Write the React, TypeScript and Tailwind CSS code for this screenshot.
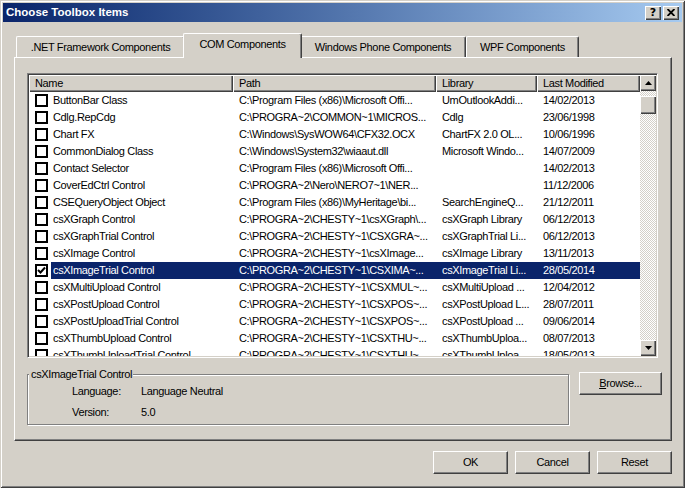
import React from "react";

const rows: [string, string, string, string][] = [
  ["ButtonBar Class", "C:\\Program Files (x86)\\Microsoft Offi...", "UmOutlookAddi...", "14/02/2013"],
  ["Cdlg.RepCdg", "C:\\PROGRA~2\\COMMON~1\\MICROS...", "Cdlg", "23/06/1998"],
  ["Chart FX", "C:\\Windows\\SysWOW64\\CFX32.OCX", "ChartFX 2.0 OL...", "10/06/1996"],
  ["CommonDialog Class", "C:\\Windows\\System32\\wiaaut.dll", "Microsoft Windo...", "14/07/2009"],
  ["Contact Selector", "C:\\Program Files (x86)\\Microsoft Offi...", "", "14/02/2013"],
  ["CoverEdCtrl Control", "C:\\PROGRA~2\\Nero\\NERO7~1\\NER...", "", "11/12/2006"],
  ["CSEQueryObject Object", "C:\\Program Files (x86)\\MyHeritage\\bi...", "SearchEngineQ...", "21/12/2011"],
  ["csXGraph Control", "C:\\PROGRA~2\\CHESTY~1\\csXGraph\\...", "csXGraph Library", "06/12/2013"],
  ["csXGraphTrial Control", "C:\\PROGRA~2\\CHESTY~1\\CSXGRA~...", "csXGraphTrial Li...", "06/12/2013"],
  ["csXImage Control", "C:\\PROGRA~2\\CHESTY~1\\csXImage...", "csXImage Library", "13/11/2013"],
  ["csXImageTrial Control", "C:\\PROGRA~2\\CHESTY~1\\CSXIMA~...", "csXImageTrial Li...", "28/05/2014"],
  ["csXMultiUpload Control", "C:\\PROGRA~2\\CHESTY~1\\CSXMUL~...", "csXMultiUpload ...", "12/04/2012"],
  ["csXPostUpload Control", "C:\\PROGRA~2\\CHESTY~1\\CSXPOS~...", "csXPostUpload L...", "28/07/2011"],
  ["csXPostUploadTrial Control", "C:\\PROGRA~2\\CHESTY~1\\CSXPOS~...", "csXPostUpload ...", "09/06/2014"],
  ["csXThumbUpload Control", "C:\\PROGRA~2\\CHESTY~1\\CSXTHU~...", "csXThumbUploa...", "08/07/2013"],
  ["csXThumbUploadTrial Control", "C:\\PROGRA~2\\CHESTY~1\\CSXTHU~...", "csXThumbUploa...", "18/05/2013"],
];

const SEL = 10;

function Tab({ label, w, selected }: { label: string; w: string; selected?: boolean }) {
  if (selected) {
    return (
      <div
        className={`${w} relative z-10 -mx-[2px] -mb-[1px] h-[25px] flex items-center justify-center bg-[#d4d0c8] border-l border-t border-r border-l-white border-t-white border-r-[#404040] rounded-t-[2px] shadow-[inset_-1px_0_0_#808080] pb-[3px]`}
      >
        {label}
      </div>
    );
  }
  return (
    <div
      className={`${w} h-[21px] flex items-center justify-center border-l border-t border-r border-l-white border-t-white border-r-[#404040] rounded-t-[2px] shadow-[inset_-1px_0_0_#808080]`}
    >
      {label}
    </div>
  );
}

function Btn({ children, w }: { children: React.ReactNode; w: string }) {
  return (
    <div
      className={`${w} h-[23px] flex items-center justify-center bg-[#d4d0c8] border border-t-white border-l-white border-r-[#404040] border-b-[#404040] shadow-[inset_-1px_-1px_0_#808080]`}
    >
      {children}
    </div>
  );
}

function HeaderCell({ label, w }: { label: string; w: string }) {
  return (
    <div
      className={`${w} h-[17px] shrink-0 flex items-center pl-[6px] bg-[#d4d0c8] shadow-[inset_1px_1px_0_#fff,inset_-1px_-1px_0_#404040,inset_-2px_-2px_0_#808080]`}
    >
      {label}
    </div>
  );
}

function Arrow({ down }: { down?: boolean }) {
  return (
    <svg width="7" height="4" viewBox="0 0 7 4" className="block">
      {down ? <polygon points="0,0 7,0 3.5,4" fill="#000" /> : <polygon points="0,4 7,4 3.5,0" fill="#000" />}
    </svg>
  );
}

const raised = "bg-[#d4d0c8] shadow-[inset_1px_1px_0_#fff,inset_-1px_-1px_0_#404040,inset_-2px_-2px_0_#808080]";

export default function App() {
  return (
    <div className="w-[685px] h-[488px] bg-[#d4d0c8] p-[3px] shadow-[inset_1px_1px_0_#d4d0c8,inset_-1px_-1px_0_#404040,inset_2px_2px_0_#fff,inset_-2px_-2px_0_#808080] font-['Liberation_Sans',Arial,sans-serif] text-[11px] leading-[13px] tracking-[-0.35px] text-black overflow-hidden">
      {/* Title bar */}
      <div className="h-[19px] flex items-center pl-[3px] pr-[3px] bg-linear-to-r from-[#0a246a] to-[#a6caf0]">
        <span className="text-white font-bold text-[11.5px] tracking-normal">Choose Toolbox Items</span>
        <div className="ml-auto flex gap-[2px]">
          <div className={`w-[16px] h-[14px] flex items-center justify-center ${raised}`}>
            <span className="font-bold text-[11px] leading-none tracking-normal font-['DejaVu_Sans',sans-serif] -mt-px">?</span>
          </div>
          <div className={`w-[16px] h-[14px] flex items-center justify-center ${raised}`}>
            <svg width="8" height="7" viewBox="0 0 8 7" className="block -mt-px">
              <path d="M0.5 0 L7.5 7 M7.5 0 L0.5 7" stroke="#000" strokeWidth="1.9" />
            </svg>
          </div>
        </div>
      </div>

      <div className="pl-[11px] pt-[11px]">
        {/* Tabs */}
        <div className="flex items-end h-[24px] pl-[2px]">
          <Tab label=".NET Framework Components" w="w-[169px]" />
          <Tab label="COM Components" w="w-[119px]" selected />
          <Tab label="Windows Phone Components" w="w-[166px]" />
          <Tab label="WPF Components" w="w-[113px]" />
        </div>

        {/* Panel */}
        <div className="w-[658px] h-[384px] border border-t-white border-l-white border-r-[#404040] border-b-[#404040] shadow-[inset_-1px_-1px_0_#808080] pl-[12px] pt-[15px]">
          {/* List view */}
          <div className="w-[631px] h-[285px] bg-white border border-t-[#808080] border-l-[#808080] border-b-white border-r-white shadow-[inset_1px_1px_0_#404040,inset_-1px_-1px_0_#d4d0c8] p-px">
            <div className="flex h-full">
              <div className="w-[611px] flex flex-col">
                <div className="flex">
                  <HeaderCell label="Name" w="w-[204px]" />
                  <HeaderCell label="Path" w="w-[203px]" />
                  <HeaderCell label="Library" w="w-[101px]" />
                  <HeaderCell label="Last Modified" w="w-[103px]" />
                </div>
                <div className="h-[264px] overflow-hidden">
                  {rows.map((r, i) => {
                    const sel = i === SEL;
                    const hl = sel ? "bg-[#0a246a] text-white" : "";
                    return (
                      <div key={i} className="flex h-[17px]">
                        <div className="w-[204px] shrink-0 flex items-center">
                          <div className="w-[22px] shrink-0 flex items-center">
                            <div className="ml-[6px] w-[13px] h-[13px] border-2 border-black bg-white flex items-center justify-center">
                              {sel && (
                                <svg width="9" height="9" viewBox="0 0 9 9" className="block">
                                  <polyline points="1,4 3.5,6.5 8,1.5" fill="none" stroke="#000" strokeWidth="2" />
                                </svg>
                              )}
                            </div>
                          </div>
                          <div className={`flex-1 h-full flex items-center pl-[2px] whitespace-nowrap overflow-hidden ${hl}`}>
                            {r[0]}
                          </div>
                        </div>
                        <div className={`w-[203px] shrink-0 flex items-center pl-[6px] whitespace-nowrap overflow-hidden ${hl}`}>{r[1]}</div>
                        <div className={`w-[101px] shrink-0 flex items-center pl-[6px] whitespace-nowrap overflow-hidden ${hl}`}>{r[2]}</div>
                        <div className={`w-[103px] shrink-0 flex items-center pl-[6px] whitespace-nowrap overflow-hidden ${hl}`}>{r[3]}</div>
                      </div>
                    );
                  })}
                </div>
              </div>
              {/* Scrollbar */}
              <div className="w-[16px] flex flex-col">
                <div className={`h-[16px] flex items-center justify-center ${raised}`}>
                  <Arrow />
                </div>
                <div className="flex-1 pt-[5px] bg-[repeating-conic-gradient(#d4d0c8_0%_25%,#ffffff_0%_50%)] bg-size-[2px_2px]">
                  <div className={`h-[18px] ${raised}`} />
                </div>
                <div className={`h-[16px] flex items-center justify-center ${raised}`}>
                  <Arrow down />
                </div>
              </div>
            </div>
          </div>

          {/* Group + Browse */}
          <div className="mt-[10px] flex items-start">
            <fieldset className="w-[542px] border border-[#808080] shadow-[1px_1px_0_#fff,inset_1px_1px_0_#fff]">
              <legend className="ml-[1px] pl-[2px] pr-[1px] bg-[#d4d0c8]">csXImageTrial Control</legend>
              <div className="pl-[44px] pt-[4px] pb-[5px] flex flex-col gap-[8px]">
                <div className="flex h-[13px] items-center">
                  <div className="w-[69px]">Language:</div>
                  <div>Language Neutral</div>
                </div>
                <div className="flex h-[13px] items-center">
                  <div className="w-[69px]">Version:</div>
                  <div>5.0</div>
                </div>
              </div>
            </fieldset>
            <div className="ml-[10px] mt-[4px]">
              <Btn w="w-[83px]">
                <span>
                  <span className="underline">B</span>rowse...
                </span>
              </Btn>
            </div>
          </div>
        </div>

        {/* Bottom buttons */}
        <div className="mt-[10px] w-[658px] flex justify-end gap-[7px]">
          <Btn w="w-[75px]">OK</Btn>
          <Btn w="w-[75px]">Cancel</Btn>
          <Btn w="w-[75px]">Reset</Btn>
        </div>
      </div>
    </div>
  );
}
